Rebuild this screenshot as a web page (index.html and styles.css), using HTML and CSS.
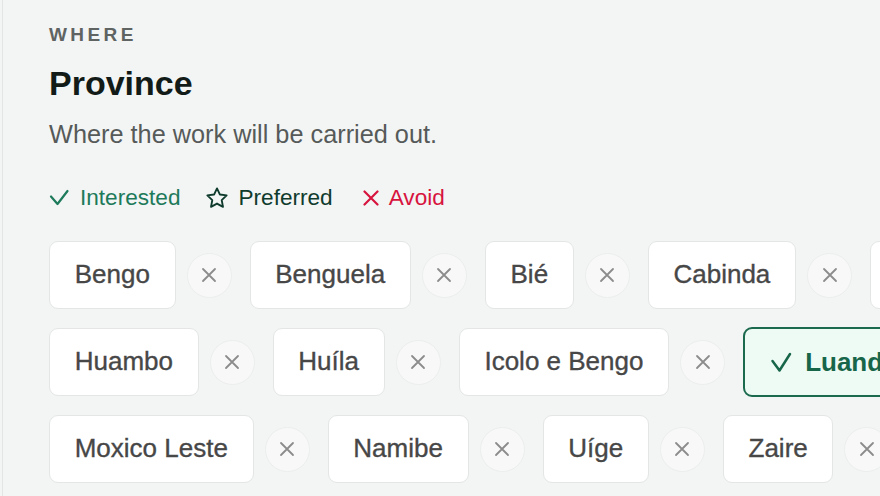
FILE: index.html
```html
<!DOCTYPE html>
<html lang="en">
<head>
<meta charset="utf-8">
<title>Province</title>
<link rel="stylesheet" href="styles.css">
</head>
<body>
<section class="page">
  <p class="eyebrow">WHERE</p>
  <h2 class="title">Province</h2>
  <p class="desc">Where the work will be carried out.</p>
  <div class="legend">
    <span class="legend-item interested">
      <svg class="licon" width="20" height="20" viewBox="0 0 20 20"><path d="M2 8.5l6.5 7.5L18.5 3" fill="none" stroke="currentColor" stroke-width="2.2" stroke-linecap="round" stroke-linejoin="round"/></svg>
      Interested
    </span>
    <span class="legend-item preferred">
      <svg class="licon" width="22" height="22" viewBox="1.5 1.5 21 21"><path d="M12 2.8l2.8 5.9 6.4.8-4.7 4.5 1.2 6.4L12 17.3l-5.7 3.1 1.2-6.4-4.7-4.5 6.4-.8z" fill="none" stroke="currentColor" stroke-width="1.8" stroke-linejoin="round"/></svg>
      Preferred
    </span>
    <span class="legend-item avoid">
      <svg class="licon" width="20" height="20" viewBox="0 0 20 20"><path d="M5.5 3.5l13 13M18.5 3.5l-13 13" fill="none" stroke="currentColor" stroke-width="2.2" stroke-linecap="round"/></svg>
      Avoid
    </span>
  </div>
  <ul class="options">
    <li class="option"><button class="chip">Bengo</button><button class="remove" aria-label="Avoid Bengo"><svg width="16" height="16" viewBox="0 0 16 16"><path d="M2 2l12 12M14 2L2 14"/></svg></button></li>
    <li class="option"><button class="chip">Benguela</button><button class="remove" aria-label="Avoid Benguela"><svg width="16" height="16" viewBox="0 0 16 16"><path d="M2 2l12 12M14 2L2 14"/></svg></button></li>
    <li class="option"><button class="chip">Bié</button><button class="remove" aria-label="Avoid Bié"><svg width="16" height="16" viewBox="0 0 16 16"><path d="M2 2l12 12M14 2L2 14"/></svg></button></li>
    <li class="option"><button class="chip">Cabinda</button><button class="remove" aria-label="Avoid Cabinda"><svg width="16" height="16" viewBox="0 0 16 16"><path d="M2 2l12 12M14 2L2 14"/></svg></button></li>
    <li class="option"><button class="chip">Cuando</button><button class="remove" aria-label="Avoid Cuando"><svg width="16" height="16" viewBox="0 0 16 16"><path d="M2 2l12 12M14 2L2 14"/></svg></button></li>
    <li class="option"><button class="chip">Cubango</button><button class="remove" aria-label="Avoid Cubango"><svg width="16" height="16" viewBox="0 0 16 16"><path d="M2 2l12 12M14 2L2 14"/></svg></button></li>
    <li class="option"><button class="chip">Cuanza Norte</button><button class="remove" aria-label="Avoid Cuanza Norte"><svg width="16" height="16" viewBox="0 0 16 16"><path d="M2 2l12 12M14 2L2 14"/></svg></button></li>
    <li class="option"><button class="chip">Cuanza Sul</button><button class="remove" aria-label="Avoid Cuanza Sul"><svg width="16" height="16" viewBox="0 0 16 16"><path d="M2 2l12 12M14 2L2 14"/></svg></button></li>
    <li class="option"><button class="chip">Cunene</button><button class="remove" aria-label="Avoid Cunene"><svg width="16" height="16" viewBox="0 0 16 16"><path d="M2 2l12 12M14 2L2 14"/></svg></button></li>
    <li class="option"><button class="chip">Huambo</button><button class="remove" aria-label="Avoid Huambo"><svg width="16" height="16" viewBox="0 0 16 16"><path d="M2 2l12 12M14 2L2 14"/></svg></button></li>
    <li class="option"><button class="chip">Huíla</button><button class="remove" aria-label="Avoid Huíla"><svg width="16" height="16" viewBox="0 0 16 16"><path d="M2 2l12 12M14 2L2 14"/></svg></button></li>
    <li class="option"><button class="chip">Icolo e Bengo</button><button class="remove" aria-label="Avoid Icolo e Bengo"><svg width="16" height="16" viewBox="0 0 16 16"><path d="M2 2l12 12M14 2L2 14"/></svg></button></li>
    <li class="option"><button class="chip is-interested"><svg class="chip-check" width="24" height="24" viewBox="0 0 24 24"><path d="M3.5 11l7 9.5L21 4" fill="none" stroke="currentColor" stroke-width="2.5" stroke-linecap="round" stroke-linejoin="round"/></svg>Luanda</button><button class="remove" aria-label="Avoid Luanda"><svg width="16" height="16" viewBox="0 0 16 16"><path d="M2 2l12 12M14 2L2 14"/></svg></button></li>
    <li class="option"><button class="chip">Lunda Norte</button><button class="remove" aria-label="Avoid Lunda Norte"><svg width="16" height="16" viewBox="0 0 16 16"><path d="M2 2l12 12M14 2L2 14"/></svg></button></li>
    <li class="option"><button class="chip">Lunda Sul</button><button class="remove" aria-label="Avoid Lunda Sul"><svg width="16" height="16" viewBox="0 0 16 16"><path d="M2 2l12 12M14 2L2 14"/></svg></button></li>
    <li class="option"><button class="chip">Malanje</button><button class="remove" aria-label="Avoid Malanje"><svg width="16" height="16" viewBox="0 0 16 16"><path d="M2 2l12 12M14 2L2 14"/></svg></button></li>
    <li class="option"><button class="chip">Moxico</button><button class="remove" aria-label="Avoid Moxico"><svg width="16" height="16" viewBox="0 0 16 16"><path d="M2 2l12 12M14 2L2 14"/></svg></button></li>
    <li class="option"><button class="chip">Moxico Leste</button><button class="remove" aria-label="Avoid Moxico Leste"><svg width="16" height="16" viewBox="0 0 16 16"><path d="M2 2l12 12M14 2L2 14"/></svg></button></li>
    <li class="option"><button class="chip">Namibe</button><button class="remove" aria-label="Avoid Namibe"><svg width="16" height="16" viewBox="0 0 16 16"><path d="M2 2l12 12M14 2L2 14"/></svg></button></li>
    <li class="option"><button class="chip">Uíge</button><button class="remove" aria-label="Avoid Uíge"><svg width="16" height="16" viewBox="0 0 16 16"><path d="M2 2l12 12M14 2L2 14"/></svg></button></li>
    <li class="option"><button class="chip">Zaire</button><button class="remove" aria-label="Avoid Zaire"><svg width="16" height="16" viewBox="0 0 16 16"><path d="M2 2l12 12M14 2L2 14"/></svg></button></li>
  </ul>
</section>
</body>
</html>
```
FILE: styles.css
```css
html, body {
  margin: 0;
  padding: 0;
  overflow: hidden;
  background: #f3f5f5;
}

.page {
  margin-left: 2px;
  min-height: 496px;
  box-sizing: border-box;
  border-left: 1px solid #e2e5e4;
  padding: 23px 0 40px 46px;
  font-family: "Liberation Sans", Arial, sans-serif;
}

.eyebrow {
  margin: 0;
  font-size: 19px;
  line-height: 24px;
  font-weight: 700;
  letter-spacing: 3.4px;
  color: #5f6462;
}

.title {
  margin: 15.5px 0 0;
  font-size: 34px;
  line-height: 40px;
  font-weight: 700;
  color: #121b17;
}

.desc {
  margin: 14.5px 0 0;
  font-size: 25.3px;
  line-height: 34px;
  color: #565a59;
}

.legend {
  display: flex;
  gap: 26px;
  margin-top: 32px;
  font-size: 22.6px;
  line-height: 30px;
}

.legend-item {
  display: flex;
  align-items: center;
  gap: 11px;
}

.licon {
  display: block;
  flex: none;
}

.interested { color: #1d7a5a; }
.preferred { color: #0f3b2d; gap: 10px; }
.avoid { color: #d7143e; gap: 10px; }

.options {
  list-style: none;
  margin: 28px 0 0;
  padding: 0;
  width: 2080px;
  display: flex;
  flex-wrap: wrap;
  align-items: center;
  column-gap: 18px;
  row-gap: 18px;
}

.option {
  display: flex;
  align-items: center;
  gap: 11px;
}

.chip {
  display: flex;
  align-items: center;
  margin: 0;
  padding: 12px 24.7px 14px;
  border: 1px solid #e4e6e6;
  border-radius: 9px;
  background: #ffffff;
  font-family: inherit;
  font-size: 26px;
  line-height: 40px;
  color: #474747;
  -webkit-text-stroke: 0.35px currentColor;
}

.chip.is-interested {
  padding: 13px 24px;
  border: 2px solid #1c6a4e;
  background: #eefaf4;
  color: #17664a;
  font-weight: 700;
  -webkit-text-stroke: 0;
  gap: 12px;
}

.chip-check {
  display: block;
  flex: none;
}

.remove {
  flex: none;
  width: 45px;
  height: 45px;
  margin: 0;
  padding: 0;
  border: 1px solid #eceeee;
  border-radius: 50%;
  background: #f8f8f8;
  display: flex;
  align-items: center;
  justify-content: center;
}

.remove svg {
  display: block;
  fill: none;
  stroke: #8c8c8c;
  stroke-width: 1.8;
  stroke-linecap: round;
}
```
